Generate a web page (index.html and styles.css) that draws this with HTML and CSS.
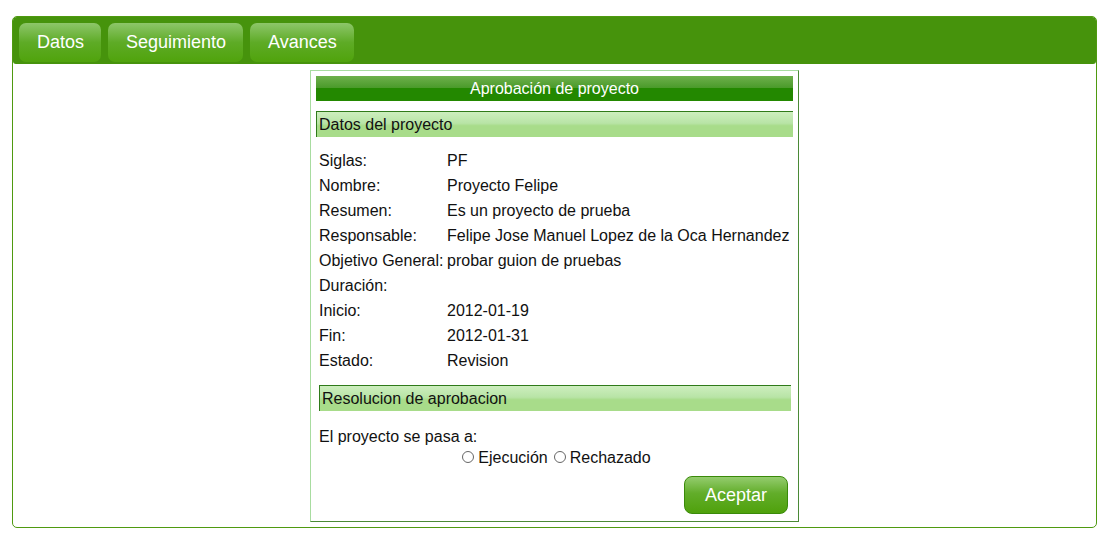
FILE: index.html
```html
<!DOCTYPE html>
<html>
<head>
<meta charset="utf-8">
<link rel="stylesheet" href="styles.css">
</head>
<body>
<div class="frame">
  <div class="nav">
    <a class="tab">Datos</a>
    <a class="tab">Seguimiento</a>
    <a class="tab">Avances</a>
  </div>
  <div class="content">
    <div class="panel">
      <div class="title">Aprobación de proyecto</div>
      <div class="section first">Datos del proyecto</div>
      <div class="rows">
        <div class="row"><span class="lbl">Siglas:</span><span>PF</span></div>
        <div class="row"><span class="lbl">Nombre:</span><span>Proyecto Felipe</span></div>
        <div class="row"><span class="lbl">Resumen:</span><span>Es un proyecto de prueba</span></div>
        <div class="row"><span class="lbl">Responsable:</span><span>Felipe Jose Manuel Lopez de la Oca Hernandez</span></div>
        <div class="row"><span class="lbl">Objetivo General:</span><span>probar guion de pruebas</span></div>
        <div class="row"><span class="lbl">Duración:</span><span></span></div>
        <div class="row"><span class="lbl">Inicio:</span><span>2012-01-19</span></div>
        <div class="row"><span class="lbl">Fin:</span><span>2012-01-31</span></div>
        <div class="row"><span class="lbl">Estado:</span><span>Revision</span></div>
      </div>
      <div class="section second">Resolucion de aprobacion</div>
      <div class="pasa">El proyecto se pasa a:</div>
      <div class="radios">
        <label><span class="radio"></span>Ejecución</label>
        <label><span class="radio"></span>Rechazado</label>
      </div>
      <div class="actions"><button class="btn">Aceptar</button></div>
    </div>
  </div>
</div>
</body>
</html>
```
FILE: styles.css
```css
html, body { margin: 0; padding: 0; background: #fff; }
body { font-family: "Liberation Sans", Arial, sans-serif; color: #111; }
.frame {
  margin: 16px 12px 0 12px;
  width: 1083px;
  height: 510px;
  border: 1px solid #4f9a10;
  border-radius: 5px;
  box-sizing: content-box;
  display: flex;
  flex-direction: column;
}
.nav {
  height: 47px;
  background: #46930c;
  border-radius: 4px 4px 3px 3px;
  display: flex;
  gap: 7px;
  padding: 6px 0 0 6px;
  box-sizing: border-box;
}
.tab {
  height: 39px;
  padding: 0 17px 0 18px;
  border-radius: 7px;
  background: linear-gradient(#8dc66a 0%, #5eab26 50%, #50a30c 100%);
  color: #fff;
  font-size: 18px;
  line-height: 39px;
  display: block;
}
.content {
  display: flex;
  justify-content: center;
  padding-top: 6px;
}
.panel {
  width: 489px;
  height: 452px;
  box-sizing: border-box;
  border: 1px solid;
  border-color: #a8dca0 #4a8a36 #4a8a36 #a8dca0;
  padding: 5px 5px 0 5px;
  font-size: 16px;
}
.title {
  height: 25px;
  background: linear-gradient(#6eb04c 0%, #4a9a2a 48%, #238800 50%, #238800 100%);
  color: #fff;
  text-align: center;
  line-height: 25px;
  font-size: 16px;
}
.section {
  height: 26px;
  border-top: 1px solid #2f7a1a;
  border-left: 1px solid #2f7a1a;
  background: linear-gradient(#cdeebe 0%, #b8e4a6 45%, #a8dc8a 55%, #a8dc8a 100%);
  line-height: 26px;
  padding-left: 2px;
  box-sizing: border-box;
}
.section.first { margin-top: 10px; }
.section.second { margin: 12px 2px 0 3px; padding-left: 2px; }
.rows { padding: 11px 0 0 3px; }
.row { height: 25px; line-height: 25px; display: flex; white-space: nowrap; }
.lbl { width: 128px; flex: none; }
.pasa { padding: 15px 0 0 3px; line-height: 22px; }
.radios {
  display: flex;
  justify-content: center;
  gap: 6px;
  line-height: 20px;
  padding-left: 4px;
}
.radios label { display: flex; align-items: center; }
.radio {
  width: 10px; height: 10px;
  border: 1px solid #666;
  border-radius: 50%;
  margin-right: 4px;
  margin-top: -3px;
  background: #fff;
}
.actions { display: flex; justify-content: flex-end; padding: 8px 5px 0 0; }
.btn {
  width: 104px;
  height: 38px;
  border: 1px solid #3a8a0a;
  border-radius: 8px;
  background: linear-gradient(#94cc6e 0%, #62ad2a 45%, #4fa10c 100%);
  color: #fff;
  font-family: "Liberation Sans", Arial, sans-serif;
  font-size: 18px;
  padding: 0;
}
```
